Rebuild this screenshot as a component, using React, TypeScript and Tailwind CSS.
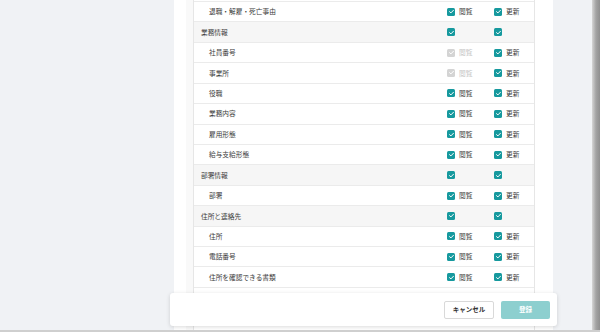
import React from 'react';

type Row = {
  label: string;
  section?: boolean;
  viewDisabled?: boolean;
};

const rows: Row[] = [
  { label: '退職・解雇・死亡事由' },
  { label: '業務情報', section: true },
  { label: '社員番号', viewDisabled: true },
  { label: '事業所', viewDisabled: true },
  { label: '役職' },
  { label: '業務内容' },
  { label: '雇用形態' },
  { label: '給与支給形態' },
  { label: '部署情報', section: true },
  { label: '部署' },
  { label: '住所と連絡先', section: true },
  { label: '住所' },
  { label: '電話番号' },
  { label: '住所を確認できる書類' },
  { label: 'メールアドレス' },
  { label: '緊急連絡先' },
];

function Check({ disabled }: { disabled?: boolean }) {
  return (
    <span
      className={`flex h-[8px] w-[8px] items-center justify-center rounded-[1.5px] ${
        disabled ? 'bg-[#d4d4d4]' : 'bg-[#16999e]'
      }`}
    >
      <svg viewBox="0 0 10 10" className="h-[7px] w-[7px]">
        <path d="M2.2 5.2 L4.2 7 L7.8 3.2" fill="none" stroke="#fff" strokeWidth="1.4" strokeLinecap="round" strokeLinejoin="round" />
      </svg>
    </span>
  );
}

function PermCell({ label, disabled, showText, width }: { label: string; disabled?: boolean; showText: boolean; width: string }) {
  return (
    <div className={`flex ${width} items-center gap-[4px]`}>
      <Check disabled={disabled} />
      {showText && (
        <span className={`text-[6.7px] leading-none ${disabled ? 'text-[#c4c4c4]' : 'text-[#3a3a3a]'}`}>{label}</span>
      )}
    </div>
  );
}

export default function App() {
  return (
    <div
      className="relative flex h-[332px] w-[600px] overflow-hidden bg-[#f0f2f5]"
      style={{ fontFamily: '"Noto Sans CJK JP", "Noto Sans", sans-serif' }}
    >
      <div className="w-[174px] shrink-0" />

      {/* drawer panel */}
      <div className="flex w-[379px] shrink-0 bg-white pl-[12px] pr-[18px]">
        <div className="flex flex-1 bg-[#f9f9f9] pl-[7px]">
          <div className="flex-1 border-x border-[#e6e6e6] bg-white pt-[1px]">
            {rows.map((r, i) => (
              <div
                key={i}
                className={`flex h-[20.43px] items-center border-t border-[#ebebeb] ${
                  r.section ? 'bg-[#f6f6f6] pl-[7px]' : 'bg-white pl-[15px]'
                }`}
              >
                <span className="flex-1 text-[6.7px] leading-none text-[#3a3a3a]">{r.label}</span>
                <div className="flex">
                  <PermCell label="閲覧" width="w-[47px]" disabled={r.viewDisabled} showText={!r.section} />
                  <PermCell label="更新" width="w-[40px]" showText={!r.section} />
                </div>
              </div>
            ))}
          </div>
        </div>
      </div>

      <div className="w-[39px] shrink-0" />
      <div className="w-[8px] shrink-0 bg-gradient-to-r from-[#d6d6d6] via-[#a3a3a3] to-[#8f8f8f]" />

      {/* footer action bar */}
      <div className="absolute left-[170px] top-[293px] flex h-[33px] w-[387px] items-center justify-end gap-[7px] rounded-[3px] bg-white pr-[7px] shadow-[0_1px_4px_rgba(0,0,0,0.15)]">
        <button className="flex h-[18px] w-[50px] items-center justify-center rounded-[2px] border border-[#d9d9d9] bg-white text-[6.5px] font-bold text-[#333]">
          キャンセル
        </button>
        <button className="flex h-[18px] w-[49px] items-center justify-center rounded-[2px] bg-[#8dcfcf] text-[6.5px] font-bold text-white">
          登録
        </button>
      </div>

      <div className="absolute bottom-0 left-0 h-[2px] w-full bg-[#cfcfcf]" />
    </div>
  );
}
